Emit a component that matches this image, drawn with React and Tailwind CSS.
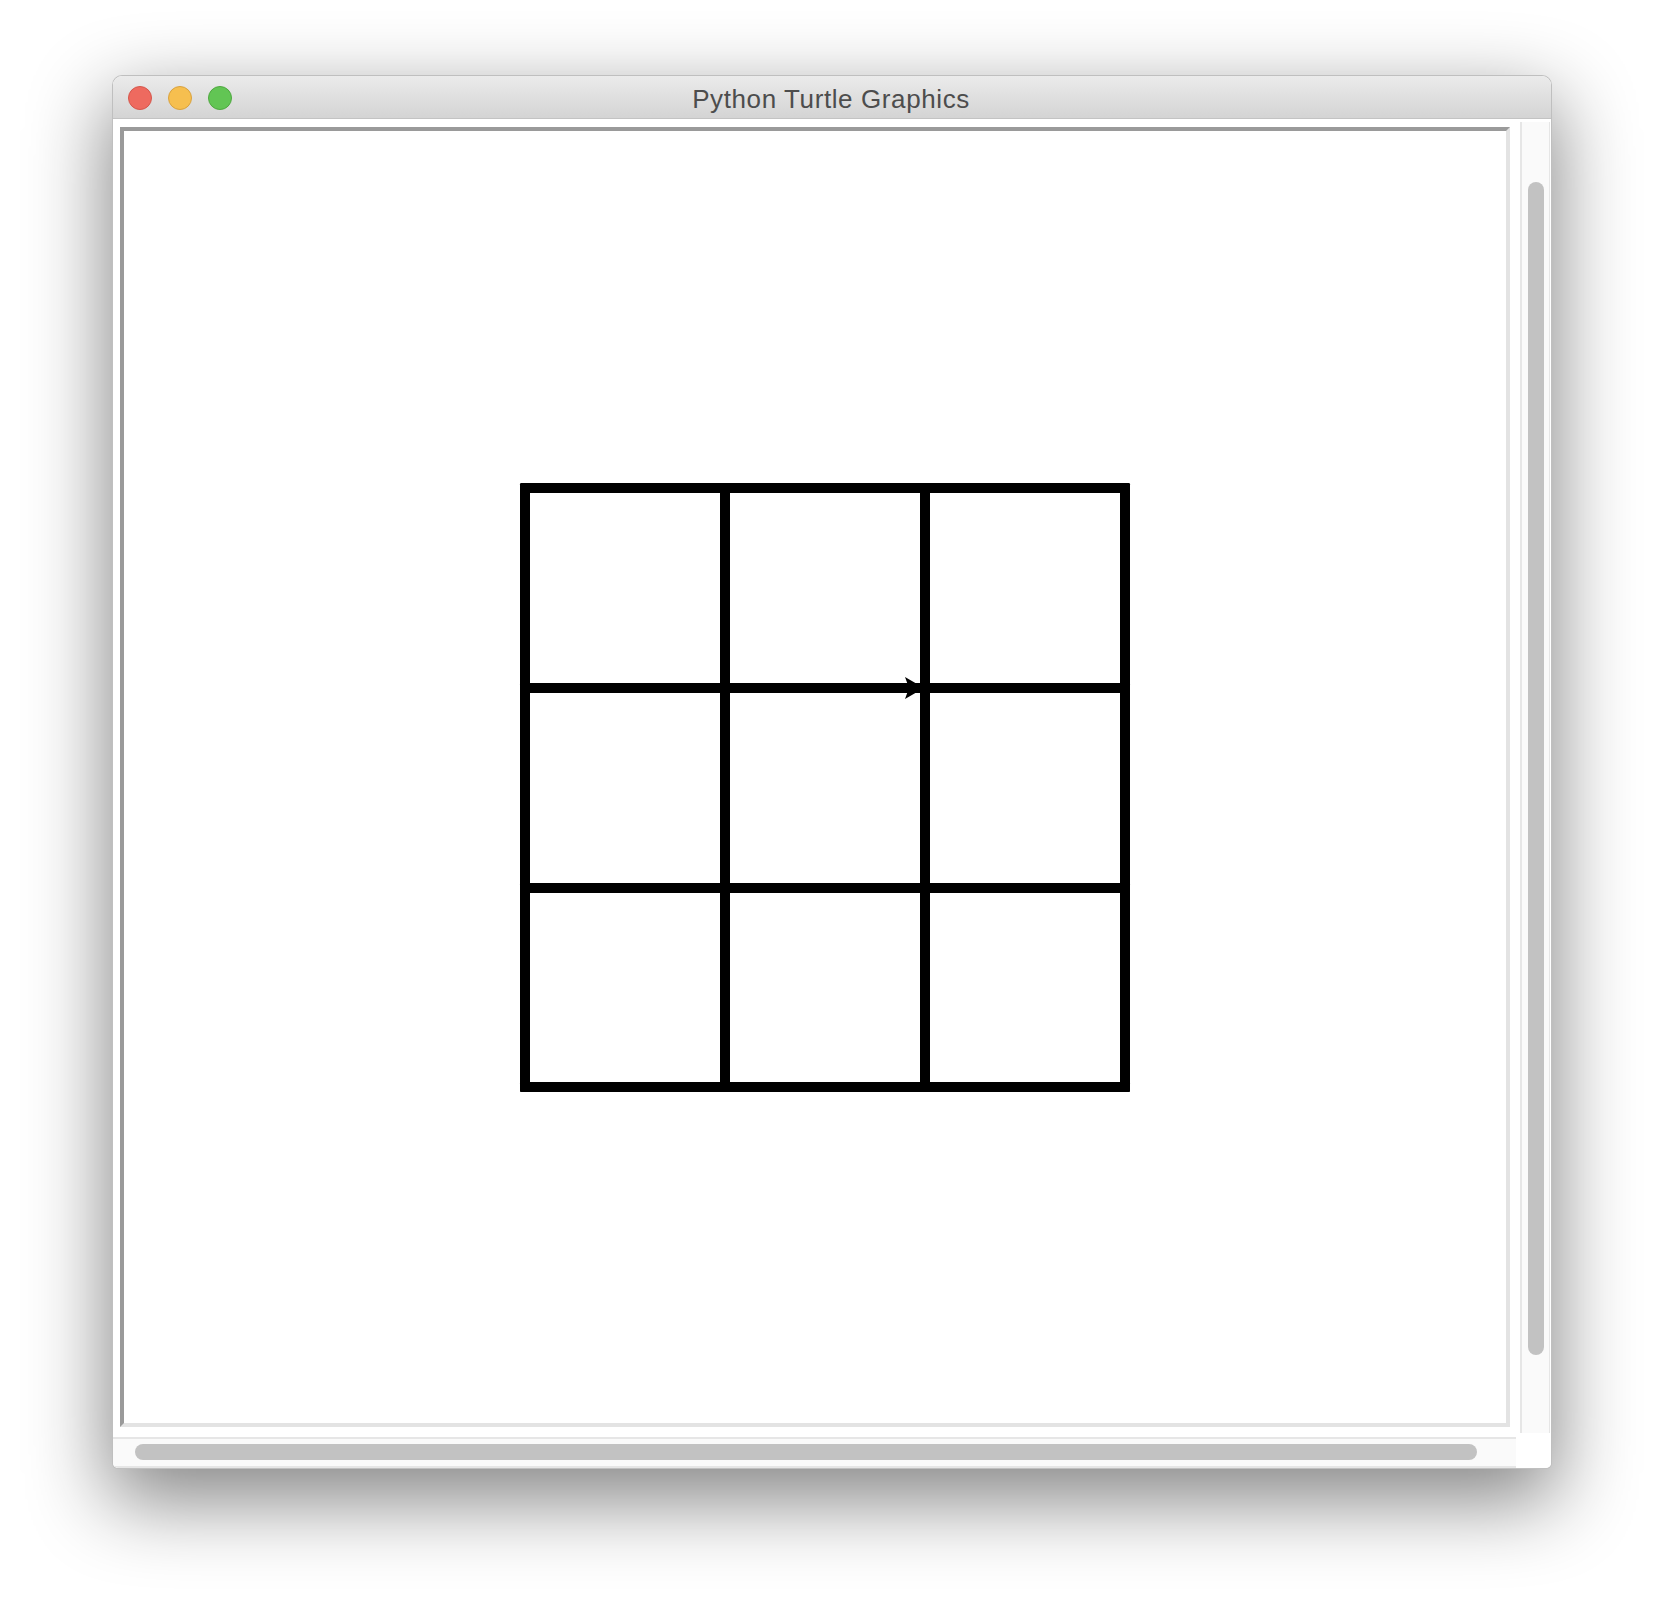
import React from "react";

function Light({ bg, border }) {
  return (
    <div
      className={`w-[24px] h-[24px] rounded-full border ${bg} ${border}`}
    />
  );
}

export default function App() {
  const vLines = [396, 596, 796, 996];
  const hLines = [352, 552, 752, 951];
  return (
    <div className="w-[1664px] h-[1618px] bg-white pt-[75px] pl-[112px] overflow-hidden">
      <div className="w-[1440px] h-[1394px] flex flex-col bg-white border border-[rgba(0,0,0,0.25)] rounded-t-[10px] rounded-b-[6px] shadow-[0_28px_80px_4px_rgba(0,0,0,0.48)] overflow-hidden">
        {/* Title bar */}
        <div className="h-[43px] shrink-0 grid grid-cols-[1fr_auto_1fr] items-center bg-gradient-to-b from-[#ebebeb] to-[#d4d4d4] border-b border-[#c3c3c3]">
          <div className="flex items-center gap-[16px] pl-[15px] pt-[1px]">
            <Light bg="bg-[#ee6a5f]" border="border-[#d5574c]" />
            <Light bg="bg-[#f6bf4f]" border="border-[#d9a23f]" />
            <Light bg="bg-[#62c554]" border="border-[#4fa840]" />
          </div>
          <div
            className="text-[26px] leading-none text-[#4d4d4d] tracking-[0.6px] pt-[4px] pr-[2px]"
            style={{ fontFamily: '"Liberation Sans", Arial, sans-serif' }}
          >
            Python Turtle Graphics
          </div>
          <div />
        </div>

        {/* Body */}
        <div className="flex-1 flex flex-col">
          <div className="h-[1318px] flex">
            {/* canvas column */}
            <div className="w-[1403px] pl-[7px] pt-[8px]">
              <div className="relative w-[1390px] h-[1300px] border-4 border-t-[#9a9a9a] border-l-[#9a9a9a] border-b-[#e3e3e3] border-r-[#e3e3e3] bg-white">
                <svg
                  className="absolute inset-0"
                  width="1382"
                  height="1292"
                  viewBox="0 0 1382 1292"
                >
                  {vLines.map((x) => (
                    <rect key={"v" + x} x={x} y={352} width={10} height={609} rx={1.5} fill="#000" />
                  ))}
                  {hLines.map((y) => (
                    <rect key={"h" + y} x={396} y={y} width={610} height={10} rx={1.5} fill="#000" />
                  ))}
                  <polygon points="800,557 781,546 785,557 781,568" fill="#000" />
                </svg>
              </div>
            </div>
            {/* vertical scrollbar */}
            <div className="w-[35px] pl-[4px] pt-[3px]">
              <div className="w-[30px] h-[1311px] bg-[#fafafa] border-l-2 border-r border-[#e6e6e6] pl-[6px] pt-[60px]">
                <div className="w-[16px] h-[1173px] rounded-full bg-[#c2c2c2]" />
              </div>
            </div>
          </div>
          {/* horizontal scrollbar */}
          <div className="h-[31px] flex">
            <div className="w-[1403px] h-[31px] bg-[#fafafa] border-t-2 border-b-2 border-[#e6e6e6] pl-[22px] pt-[5px]">
              <div className="w-[1342px] h-[16px] rounded-full bg-[#c2c2c2]" />
            </div>
            <div className="flex-1 bg-white" />
          </div>
        </div>
      </div>
    </div>
  );
}
